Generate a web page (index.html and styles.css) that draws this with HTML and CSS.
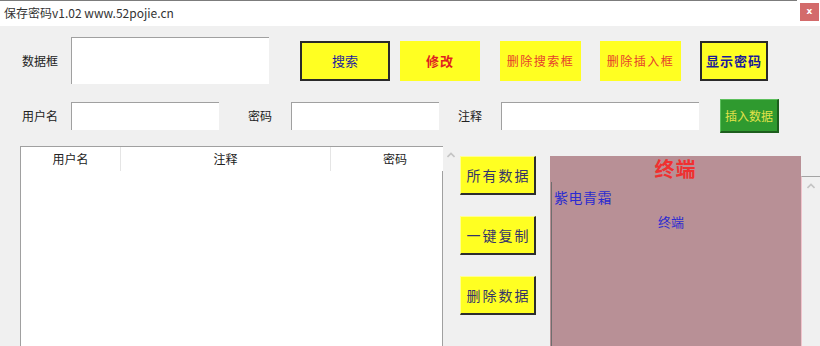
FILE: index.html
```html
<!DOCTYPE html>
<html lang="zh-CN">
<head>
<meta charset="utf-8">
<title>保存密码v1.02</title>
<link rel="stylesheet" href="styles.css">
</head>
<body>
<div class="window">
  <div class="titlebar">
    <div class="title">保存密码v1.02 www.52pojie.cn</div>
    <div class="close">x</div>
  </div>
  <div class="client">
    <div class="row row1">
      <span class="label lbl-data">数据框</span>
      <div class="textbox tb-data"></div>
      <div class="btn btn-framed btn-search">搜索</div>
      <div class="btn btn-edit">修改</div>
      <div class="btn btn-clear btn-clear1">删除搜索框</div>
      <div class="btn btn-clear btn-clear2">删除插入框</div>
      <div class="btn btn-framed btn-show">显示密码</div>
    </div>
    <div class="row row2">
      <span class="label lbl-user">用户名</span>
      <div class="textbox tb-user"></div>
      <span class="label lbl-pass">密码</span>
      <div class="textbox tb-pass"></div>
      <span class="label lbl-note">注释</span>
      <div class="textbox tb-note"></div>
      <div class="btn btn-insert">插入数据</div>
    </div>
    <div class="row row3">
      <div class="table">
        <div class="thead">
          <div class="th c1">用户名</div>
          <div class="th c2">注释</div>
          <div class="th c3">密码</div>
        </div>
        <div class="tbody"></div>
      </div>
      <div class="vscroll">
        <svg class="chev" width="8" height="6" viewBox="0 0 8 6"><polyline points="0.5,5 4,1.5 7.5,5" fill="none" stroke="#c4c4c4" stroke-width="1.6"/></svg>
      </div>
      <div class="side-buttons">
        <div class="sbtn">所有数据</div>
        <div class="sbtn">一键复制</div>
        <div class="sbtn">删除数据</div>
      </div>
      <div class="panel">
        <div class="panel-title">终端</div>
        <div class="panel-box">
          <div class="line1">紫电青霜</div>
          <div class="line2">终端</div>
        </div>
      </div>
      <div class="rightstrip">
        <svg class="chev" width="8" height="6" viewBox="0 0 8 6"><polyline points="0.5,5 4,1.5 7.5,5" fill="none" stroke="#c4c4c4" stroke-width="1.6"/></svg>
      </div>
    </div>
  </div>
</div>
</body>
</html>
```
FILE: styles.css
```css
* { box-sizing: border-box; }
html, body { margin: 0; padding: 0; }
body {
  width: 820px;
  height: 346px;
  overflow: hidden;
  background: #f0f0f0;
  font-family: "Noto Sans CJK SC", "Microsoft YaHei", sans-serif;
  color: #222;
}
.window { width: 820px; height: 346px; display: flex; flex-direction: column; }

.titlebar {
  height: 26px;
  background: #fff;
  display: flex;
  align-items: flex-start;
}
.title {
  flex: 1;
  height: 26px;
  border-top: 1px solid #7c7c7c;
  padding-left: 4px;
  font-size: 12px;
  line-height: 24px;
  color: #333;
  white-space: nowrap;
}
.close {
  width: 19px;
  height: 18px;
  margin: 3px 1px 0 3px;
  background: #d36b6b;
  color: #fff;
  font-family: "DejaVu Sans", sans-serif;
  font-weight: bold;
  font-size: 9px;
  line-height: 17px;
  text-align: center;
}

.client { flex: 1; background: #f0f0f0; }
.row { display: flex; align-items: center; padding-left: 22px; }
.label { font-size: 12px; color: #222; line-height: 16px; white-space: nowrap; }
.textbox {
  background: #fff;
  border-top: 1px solid #a0a0a0;
  border-left: 1px solid #a0a0a0;
}

.row1 { margin-top: 11px; height: 47px; }
.lbl-data { width: 49px; }
.tb-data { width: 198px; height: 47px; }
.btn {
  height: 40px;
  background: #ffff22;
  display: flex;
  align-items: center;
  justify-content: center;
  font-size: 13px;
  white-space: nowrap;
}
.btn-framed { border: 2px solid #2a2a2a; }
.btn-search { width: 90px; margin-left: 31px; color: #1e1e9e; }
.btn-edit { width: 80px; margin-left: 10px; color: #e02020; font-weight: bold; letter-spacing: 1px; }
.btn-clear { width: 81px; font-size: 12px; color: #e6402c; letter-spacing: 1.5px; }
.btn-clear1 { margin-left: 20px; }
.btn-clear2 { margin-left: 19px; }
.btn-show { width: 68px; margin-left: 19px; color: #1a1a9a; font-weight: bold; letter-spacing: 1px; }

.row2 { margin-top: 15px; height: 34px; }
.lbl-user { width: 49px; }
.tb-user { width: 148px; height: 28px; }
.lbl-pass { margin-left: 29px; width: 43px; }
.tb-pass { width: 148px; height: 28px; }
.lbl-note { margin-left: 19px; width: 43px; }
.tb-note { width: 198px; height: 28px; }
.btn-insert {
  width: 59px;
  height: 34px;
  margin-left: 21px;
  background: #2f9a2f;
  border-top: 1px solid #5cbf5c;
  border-left: 1px solid #5cbf5c;
  border-right: 2px solid #1d5e1d;
  border-bottom: 2px solid #1d5e1d;
  color: #e2e24a;
  font-size: 12px;
  display: flex;
  align-items: center;
  justify-content: center;
  white-space: nowrap;
}

.row3 {
  margin-top: 13px;
  padding-left: 20px;
  align-items: flex-start;
  height: 200px;
}
.table {
  width: 423px;
  height: 200px;
  border-left: 1px solid #a0a0a0;
  border-top: 1px solid #a0a0a0;
  display: flex;
  flex-direction: column;
}
.thead { height: 24px; display: flex; background: #fff; }
.th { font-size: 12px; line-height: 24px; color: #222; white-space: nowrap; }
.c1 { width: 100px; border-right: 1px solid #e5e5e5; text-align: center; }
.c2 { width: 210px; border-right: 1px solid #e5e5e5; text-align: center; }
.c3 { flex: 1; padding-left: 52px; }
.tbody { flex: 1; background: #fff; border-right: 1px solid #a0a0a0; }

.vscroll { width: 17px; padding: 6px 0 0 4px; }
.chev { display: block; }

.side-buttons {
  width: 76px;
  margin-top: 10px;
  display: flex;
  flex-direction: column;
  gap: 21px;
}
.sbtn {
  height: 39px;
  background: #ffff22;
  border-top: 1px solid #ffff90;
  border-left: 1px solid #ffff90;
  border-right: 2px solid #2e2e2e;
  border-bottom: 2px solid #2e2e2e;
  color: #34346a;
  font-size: 14px;
  letter-spacing: 2px;
  padding-left: 2px;
  display: flex;
  align-items: center;
  justify-content: center;
  white-space: nowrap;
}

.panel {
  width: 251px;
  height: 190px;
  margin-left: 14px;
  margin-top: 10px;
  background: #b89096;
  display: flex;
  flex-direction: column;
}
.panel-title {
  height: 26px;
  line-height: 26px;
  text-align: center;
  color: #f03030;
  font-size: 20px;
  font-weight: bold;
  letter-spacing: 1px;
}
.panel-box {
  flex: 1;
  margin-left: 1px;
  border-left: 1px solid #6e6e6e;
  padding: 6px 0 0 2px;
  color: #2b2bd0;
}
.line1 { font-size: 14px; line-height: 18px; letter-spacing: 0.5px; }
.line2 { font-size: 13px; line-height: 18px; margin-top: 7px; padding-left: 104px; }

.rightstrip {
  width: 19px;
  height: 170px;
  margin-top: 30px;
  border-top: 1px solid #a4a4a4;
  border-left: 1px solid #f0c4cc;
  padding: 6px 0 0 5px;
}
```
